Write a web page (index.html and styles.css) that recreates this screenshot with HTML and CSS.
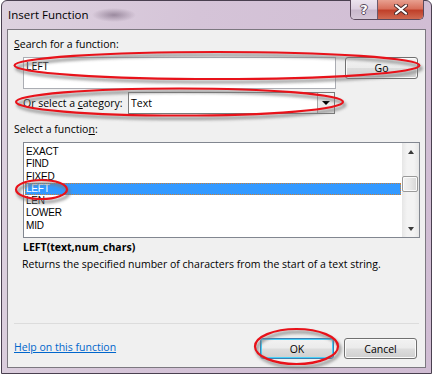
FILE: index.html
```html
<!DOCTYPE html>
<html>
<head>
<meta charset="utf-8">
<title>Insert Function</title>
<link rel="stylesheet" href="styles.css">
</head>
<body>
<div class="frame">
  <div class="titlebar">
    <span class="title">Insert Function</span>
    <div class="caption-btns">
      <div class="cbtn help">?</div>
      <div class="cbtn close">
        <svg width="14" height="11" viewBox="0 0 14 11">
          <path d="M2 1.5 L12 9.5 M12 1.5 L2 9.5" stroke="#4a2a2a" stroke-width="4" stroke-linecap="round" fill="none"/>
          <path d="M2 1.5 L12 9.5 M12 1.5 L2 9.5" stroke="#ffffff" stroke-width="2.2" stroke-linecap="round" fill="none"/>
        </svg>
      </div>
    </div>
  </div>
  <div class="client">
    <div class="label"><u>S</u>earch for a function:</div>
    <div class="search-row">
      <div class="textbox">LEFT</div>
      <div class="btn go">Go</div>
    </div>
    <div class="cat-row">
      <span class="cat-label">Or select a <u>c</u>ategory:</span>
      <div class="select">
        <span class="select-text">Text</span>
        <span class="drop"><span class="tri-down"></span></span>
      </div>
    </div>
    <div class="label label2">Select a functio<u>n</u>:</div>
    <div class="listbox">
      <div class="items">
        <div class="item">EXACT</div>
        <div class="item">FIND</div>
        <div class="item">FIXED</div>
        <div class="item selected">LEFT</div>
        <div class="item">LEN</div>
        <div class="item">LOWER</div>
        <div class="item">MID</div>
      </div>
      <div class="scrollbar">
        <div class="sb-btn"><span class="tri-up"></span></div>
        <div class="sb-thumb"></div>
        <div class="sb-fill"></div>
        <div class="sb-btn"><span class="tri-down small"></span></div>
      </div>
    </div>
    <div class="syntax">LEFT(text,num_chars)</div>
    <div class="desc">Returns the specified number of characters from the start of a text string.</div>
    <div class="separator"></div>
    <div class="bottom-row">
      <span class="help-link">Help on this function</span>
      <div class="btn-group">
        <div class="btn ok">OK</div>
        <div class="btn cancel">Cancel</div>
      </div>
    </div>
  </div>
</div>
<svg class="annot" width="433" height="375" viewBox="0 0 433 375">
  <defs>
    <filter id="sh" x="-10%" y="-60%" width="120%" height="220%">
      <feGaussianBlur stdDeviation="1.6"/>
    </filter>
  </defs>
  <g fill="none" stroke="#7a7a7a" stroke-width="3" filter="url(#sh)" transform="translate(2,3)" opacity="0.75">
    <ellipse cx="217" cy="65.5" rx="202.5" ry="13.5"/>
    <ellipse cx="179.5" cy="102" rx="163.5" ry="13.5"/>
    <ellipse cx="41.5" cy="189.5" rx="25.5" ry="9.5"/>
    <ellipse cx="296.5" cy="346.5" rx="41.5" ry="17.5"/>
  </g>
  <g fill="none" stroke="#e8121a" stroke-width="2.2">
    <ellipse cx="217" cy="65.5" rx="202.5" ry="13.5"/>
    <ellipse cx="179.5" cy="102" rx="163.5" ry="13.5"/>
    <ellipse cx="41.5" cy="189.5" rx="25.5" ry="9.5"/>
    <ellipse cx="296.5" cy="346.5" rx="41.5" ry="17.5"/>
  </g>
</svg>
</body>
</html>
```
FILE: styles.css
```css
* { box-sizing: border-box; }
html, body { margin: 0; padding: 0; background: #ffffff; }
body {
  width: 433px;
  height: 375px;
  position: relative;
  overflow: hidden;
  font-family: "Open Sans", "Noto Sans", sans-serif;
  font-size: 10.5px;
  color: #000;
}
.frame {
  margin-left: 1px;
  width: 431px;
  height: 374px;
  border: 1px solid #4a4050;
  border-radius: 6px 6px 0 0;
  padding: 0 5px 5px;
  background:
    radial-gradient(ellipse 22px 7px at 112px 14px, rgba(80,60,85,0.45), rgba(80,60,85,0) 100%),
    linear-gradient(100deg, #ddd2df 0%, #d5c4d8 40%, #d0bcd3 100%);
}
.titlebar {
  height: 28px;
  display: flex;
  justify-content: space-between;
  align-items: flex-start;
}
.title {
  padding-left: 1px;
  margin-top: 6px;
  line-height: 16px;
  font-size: 11.5px;
  color: #000;
}
.caption-btns {
  display: flex;
  margin-top: -1px;
  margin-right: 2px;
  height: 20px;
  border: 1px solid #5a4a5c;
  border-top: none;
  border-radius: 0 0 5px 5px;
  overflow: hidden;
}
.cbtn {
  display: flex;
  align-items: center;
  justify-content: center;
  height: 100%;
}
.help {
  width: 27px;
  border-right: 1px solid #6a5a6c;
  background: linear-gradient(#ece4ee 0%, #ddd0e0 45%, #c9b8cc 55%, #d4c6d6 100%);
  color: #fff;
  font-family: "DejaVu Sans", sans-serif;
  font-weight: bold;
  font-size: 13px;
  text-shadow: 1px 0 0 #5a4a5c, -1px 0 0 #5a4a5c, 0 1px 0 #5a4a5c, 0 -1px 0 #5a4a5c;
}
.close {
  width: 45px;
  background: linear-gradient(#e8a090 0%, #d8705c 45%, #c0402a 55%, #d06a52 100%);
}
.client {
  height: 339px;
  border: 1px solid #7c7880;
  background: #f0f0f0;
  padding: 7px 5px 0 6px;
}
.label {
  line-height: 15px;
}
.label2 { margin-top: 8px; }
.search-row {
  margin-top: 5px;
  margin-left: 9px;
  display: flex;
  align-items: flex-start;
  gap: 9px;
}
.textbox {
  width: 313px;
  height: 32px;
  border: 1px solid #abadb3;
  background: #fff;
  padding: 1px 2px;
  line-height: 15px;
}
.btn {
  height: 22px;
  border: 1px solid #707070;
  border-radius: 3px;
  background: linear-gradient(#f2f2f2 0%, #ebebeb 48%, #dddddd 52%, #cfcfcf 100%);
  box-shadow: inset 0 0 0 1px #fbfbfb;
  display: flex;
  align-items: center;
  justify-content: center;
}
.go { width: 73px; }
.cat-row {
  margin-top: 3px;
  margin-left: 9px;
  display: flex;
  align-items: center;
}
.cat-label { width: 105px; line-height: 15px; }
.select {
  width: 207px;
  height: 22px;
  border: 1px solid #7a7a7a;
  background: #fff;
  display: flex;
  align-items: center;
}
.select-text { flex: 1; padding-left: 2px; }
.drop {
  width: 17px;
  height: 100%;
  border-left: 1px solid #a8a8a8;
  background: linear-gradient(#f4f4f4, #e4e4e4);
  display: flex;
  align-items: center;
  justify-content: center;
}
.tri-down {
  width: 0; height: 0;
  border-left: 4px solid transparent;
  border-right: 4px solid transparent;
  border-top: 4px solid #000;
}
.tri-down.small {
  border-left-width: 3.5px;
  border-right-width: 3.5px;
  border-top: 4px solid #3a3a3a;
}
.tri-up {
  width: 0; height: 0;
  border-left: 3.5px solid transparent;
  border-right: 3.5px solid transparent;
  border-bottom: 4px solid #3a3a3a;
}
.listbox {
  margin-top: 5px;
  margin-left: 9px;
  width: 397px;
  height: 96px;
  border: 1px solid #828790;
  background: #fff;
  display: flex;
}
.items {
  flex: 1;
  padding-top: 3px;
}
.item {
  height: 12.3px;
  line-height: 12.3px;
  margin: 0 1px;
  padding-left: 1px;
  font-family: "Liberation Sans", Arial, sans-serif;
  font-size: 10px;
  letter-spacing: -0.2px;
  border: 1px solid transparent;
  border-width: 0;
}
.item.selected {
  background: #3399ff;
  color: #fff;
  outline: 1px dotted #c8803a;
  outline-offset: -1px;
}
.scrollbar {
  width: 17px;
  display: flex;
  flex-direction: column;
  background: linear-gradient(to right, #e6e6e6 0%, #f3f3f3 30%, #f3f3f3 70%, #e6e6e6 100%);
}
.sb-btn {
  height: 17px;
  display: flex;
  align-items: center;
  justify-content: center;
}
.sb-thumb {
  margin: 16px 1px 0 0;
  height: 16px;
  border: 1px solid #9a9a9a;
  border-radius: 2px;
  background: linear-gradient(to right, #f2f2f2 0%, #e8e8e8 50%, #d6d6d6 100%);
  box-shadow: inset 0 0 0 1px #fafafa;
}
.sb-fill { flex: 1; }
.syntax {
  margin-top: 2px;
  margin-left: 9px;
  font-weight: 700;
  line-height: 15px;
}
.desc {
  margin-top: 2px;
  margin-left: 8px;
  line-height: 15px;
}
.separator {
  margin-top: 51px;
  margin-right: 1px;
  height: 1px;
  background: #dcdcdc;
}
.bottom-row {
  margin-top: 14px;
  display: flex;
  align-items: center;
  justify-content: space-between;
}
.help-link {
  color: #0066cc;
  text-decoration: underline;
  line-height: 15px;
  margin-top: -3px;
}
.btn-group {
  display: flex;
  gap: 10px;
  margin-right: 3px;
}
.ok {
  width: 74px;
  height: 21px;
  border-color: #3c7fb1;
  box-shadow: inset 0 0 0 1px #48d0f8;
}
.cancel {
  width: 73px;
  height: 21px;
}
.annot {
  position: absolute;
  left: 0;
  top: 0;
  pointer-events: none;
}
```
